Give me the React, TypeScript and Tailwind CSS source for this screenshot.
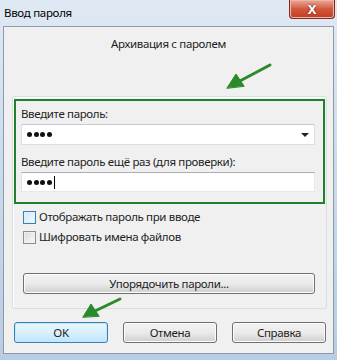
import React from 'react';

// Win7-style "password" dialog

const font = { fontFamily: '"Noto Sans", "Liberation Sans", sans-serif' };

function Dots({ caret }: { caret?: boolean }) {
  return (
    <div className="flex items-center gap-[1.5px]">
      {[0, 1, 2, 3].map((i) => (
        <div key={i} className="w-[5px] h-[5px] rounded-full bg-[#111]" />
      ))}
      {caret && <div className="ml-[1px] w-px h-[13px] bg-black" />}
    </div>
  );
}

function Check({ hover, label }: { hover?: boolean; label: string }) {
  return (
    <div className="flex items-center h-[16px] ml-[10px]">
      <div
        className={
          hover
            ? 'w-[13px] h-[13px] border border-[#3c7fb1] bg-gradient-to-br from-[#cfe6f7] to-[#f4fbff] shadow-[inset_0_0_0_1px_#def2fb]'
            : 'w-[13px] h-[13px] border border-[#8f8f8f] bg-gradient-to-br from-[#dcdcdc] to-[#f8f8f8] shadow-[inset_0_0_0_1px_#f0f0f0]'
        }
      />
      <span className="ml-[3px] text-[11.5px] tracking-[-0.35px] text-[#1e1e1e] leading-none">{label}</span>
    </div>
  );
}

function Btn({ label, def, w }: { label: string; def?: boolean; w: string }) {
  return (
    <div
      className={
        'h-[21px] rounded-[3px] border flex items-center justify-center text-[11.5px] tracking-[-0.35px] text-[#1e1e1e] ' +
        w +
        (def
          ? ' border-[#3c7fb1] bg-gradient-to-b from-[#eaf6fd] via-[#d9f0fc] to-[#bee6fd] shadow-[inset_0_0_0_1px_#bfe9ff]'
          : ' border-[#707070] bg-gradient-to-b from-[#f2f2f2] via-[#ebebeb] to-[#cfcfcf] shadow-[inset_0_0_0_1px_#fcfcfc]')
      }
    >
      {label}
    </div>
  );
}

export default function App() {
  return (
    <div style={font} className="relative w-[337px] h-[360px] overflow-hidden bg-gradient-to-b from-[#dfe9f4] via-[#c9daeb] to-[#b7cde4] select-none">
      {/* ── Title bar ─────────────────────────────────────────── */}
      <div className="h-[26px] flex items-start justify-between">
        <span className="ml-[4px] mt-[5px] text-[11.5px] tracking-[-0.3px] text-black leading-[16px]">Ввод пароля</span>
        <div className="mr-[2px] w-[46px] h-[19px] rounded-b-[4px] border border-t-0 border-[#7a2b22] bg-gradient-to-b from-[#e9a99c] via-[#d2573d] to-[#c23b22] shadow-[inset_0_0_0_1px_#efb5a8] flex items-center justify-center">
          <span className="text-white font-bold text-[13px] leading-none [text-shadow:0_0_2px_#5a1a10]">X</span>
        </div>
      </div>

      {/* ── Client area ───────────────────────────────────────── */}
      <div className="mx-[3px] h-[328px] border border-[#8e9aa8] bg-[#f0f0f0] flex flex-col">
        <div className="h-[69px] pt-[9px] text-center text-[11.5px] tracking-[-0.35px] leading-[16px] text-[#1e1e1e]">
          Архивация с паролем
        </div>

        {/* panel */}
        <div className="ml-[8px] w-[315px] h-[213px] border border-[#d5dfe5] rounded-[2px] shadow-[inset_1px_1px_0_#fff] flex flex-col">
          <div className="ml-[1px] mt-[2px] w-[311px] h-[105px] border-2 border-[#22802a] flex flex-col text-[11.5px] tracking-[-0.35px] leading-[15px] text-[#1e1e1e]">
            <div className="ml-[5px] mt-[5px] h-[15px]">Введите пароль:</div>
            <div className="ml-[5px] mt-[3px] w-[294px] h-[21px] bg-white border border-[#dadfe5] border-t-[#c5cad0] flex items-center justify-between pl-[5px] pr-[5px]">
              <Dots />
              <svg width="8" height="4" viewBox="0 0 8 4"><path d="M0 0H8L4 4Z" fill="#222" /></svg>
            </div>
            <div className="ml-[5px] mt-[9px] h-[15px]">
              Введите пароль ещё раз (для проверки):
            </div>
            <div className="ml-[5px] mt-[3px] w-[294px] h-[20px] bg-white border border-[#e3e9ef] border-t-[#abadb3] border-l-[#e2e3ea] flex items-center pl-[5px]">
              <Dots caret />
            </div>
          </div>

          <div className="mt-[5px]"><Check hover label="Отображать пароль при вводе" /></div>
          <div className="mt-[4px]"><Check label="Шифровать имена файлов" /></div>

          <div className="ml-[10px] mt-[28px]">
            <Btn label="Упорядочить пароли..." w="w-[292px]" />
          </div>
        </div>

        <div className="mt-[13px] ml-[10px] flex gap-[15px]">
          <Btn label="OK" def w="w-[94px]" />
          <Btn label="Отмена" w="w-[94px]" />
          <Btn label="Справка" w="w-[94px]" />
        </div>
      </div>

      {/* ── Annotation arrows ─────────────────────────────────── */}
      <svg className="absolute inset-0 pointer-events-none" width="337" height="360" viewBox="0 0 337 360">
        <g fill="#2a8a2a" stroke="#2a8a2a" strokeLinecap="round" strokeLinejoin="round">
          <line x1="270" y1="65" x2="238" y2="82" strokeWidth="3" />
          <path d="M227 88 L236 74 L244 86 Z" strokeWidth="1" />
          <line x1="120" y1="299" x2="93" y2="312" strokeWidth="3" />
          <path d="M83 317 L91 304 L99 316 Z" strokeWidth="1" />
        </g>
      </svg>
    </div>
  );
}
